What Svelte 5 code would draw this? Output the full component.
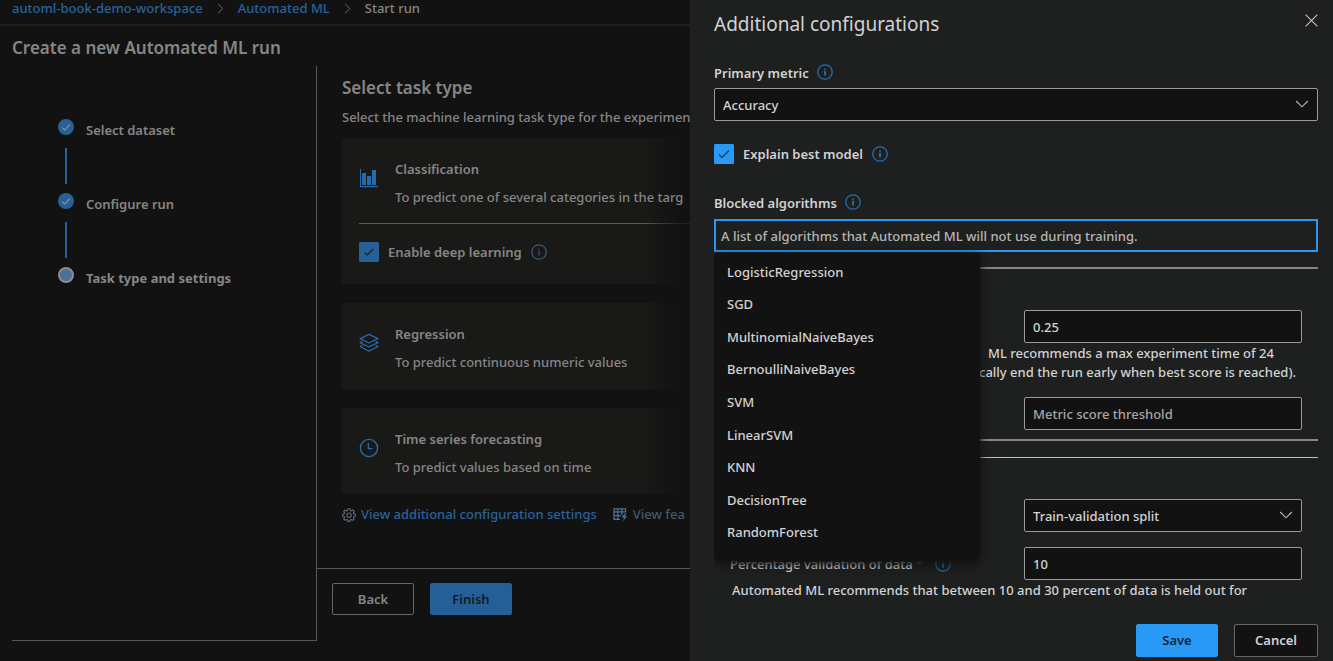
<script>
  const steps = [
    { label: 'Select dataset', done: true },
    { label: 'Configure run', done: true },
    { label: 'Task type and settings', done: false }
  ];

  const algorithms = [
    'LogisticRegression',
    'SGD',
    'MultinomialNaiveBayes',
    'BernoulliNaiveBayes',
    'SVM',
    'LinearSVM',
    'KNN',
    'DecisionTree',
    'RandomForest'
  ];

  let deepLearning = $state(true);
  let explainModel = $state(true);
  let metric = $state('Accuracy');
  let validation = $state('Train-validation split');
  let trainingHours = $state('0.25');
  let percentage = $state('10');
</script>

{#snippet info(name)}
  <button class="info" type="button" aria-label={name}>
    <svg width="16" height="16" viewBox="0 0 16 16" fill="none" stroke="currentColor">
      <circle cx="8" cy="8" r="7.2" stroke-width="1.3" />
      <path class="mark" d="M8 6.8v4.7M8 4.4v1.3" stroke-width="1.2" />
    </svg>
  </button>
{/snippet}

{#snippet crumbArrow()}
  <svg width="7" height="11" viewBox="0 0 7 11" fill="none" stroke="#6c6c6c" aria-hidden="true">
    <path d="M1 .8l4.8 4.7L1 10.2" />
  </svg>
{/snippet}

{#snippet chevron()}
  <svg class="chevron" width="14" height="8" viewBox="0 0 14 8" fill="none" stroke="#b9b9b9" stroke-width="1.1" aria-hidden="true">
    <path d="M1.2 1L7 6.8 12.8 1" />
  </svg>
{/snippet}

<div class="shell">
  <div class="page">
    <nav class="crumbs" aria-label="Breadcrumb">
      <a href="#workspace">automl-book-demo-workspace</a>
      {@render crumbArrow()}
      <a href="#automl">Automated ML</a>
      {@render crumbArrow()}
      <span>Start run</span>
    </nav>
    <h1>Create a new Automated ML run</h1>

    <div class="wizard">
      <ol class="steps">
        {#each steps as step}
          <li class:current={!step.done}>
            <svg class="dot" width="16" height="16" viewBox="0 0 16 16" fill="none" aria-hidden="true">
              {#if step.done}
                <circle cx="8" cy="8" r="8" fill="#286197" />
                <path d="M4 8.6l2.6 2.3L12 5.6" stroke="#8f8f8f" stroke-width="1.2" />
              {:else}
                <circle cx="8" cy="8" r="7" fill="#4a7298" stroke="#8c8c8c" stroke-width="2" />
              {/if}
            </svg>
            <span>{step.label}</span>
          </li>
        {/each}
      </ol>

      <main>
        <div class="task">
          <h2>Select task type</h2>
          <p class="lead">Select the machine learning task type for the experimen</p>

          <section class="card">
            <div class="row">
              <svg width="20" height="20" viewBox="0 0 20 20" fill="#286aa8" aria-hidden="true">
                <path d="M1 1h1v17H1zM1 18h18v1.2H1zM3 5h4v12H3zM8 8h4v9H8zM13 2h4v15h-4z" />
              </svg>
              <div>
                <h3>Classification</h3>
                <p>To predict one of several categories in the targ</p>
              </div>
            </div>
            <hr />
            <div class="check">
              <span class="box">
                <input id="deep" type="checkbox" bind:checked={deepLearning} />
                <svg width="12" height="10" viewBox="0 0 12 10" fill="none" stroke="#11202c" stroke-width="1.2" aria-hidden="true"><path d="M1.500 5.400l2.500 2.500L10.500 2" /></svg>
              </span>
              <label for="deep">Enable deep learning</label>
              {@render info('About deep learning')}
            </div>
          </section>

          <section class="card">
            <div class="row">
              <svg width="20" height="20" viewBox="0 0 20 20" fill="none" stroke="#286aa8" stroke-width="1.3" stroke-linejoin="round" aria-hidden="true">
                <path d="M10 1.4l8.8 4.3L10 10 1.2 5.7zM3.4 8.4L1.2 9.6 10 14l8.8-4.4-2.2-1.2M3.4 12.3l-2.2 1.2L10 18.2l8.8-4.7-2.2-1.2" />
              </svg>
              <div>
                <h3>Regression</h3>
                <p>To predict continuous numeric values</p>
              </div>
            </div>
          </section>

          <section class="card">
            <div class="row">
              <svg width="20" height="20" viewBox="0 0 20 20" fill="none" stroke="#286aa8" stroke-width="1.4" aria-hidden="true">
                <circle cx="10" cy="10" r="8.6" />
                <path d="M9.4 5v5.6h4" />
              </svg>
              <div>
                <h3>Time series forecasting</h3>
                <p>To predict values based on time</p>
              </div>
            </div>
          </section>

          <div class="links">
            <a href="#config">
              <svg width="14" height="14" viewBox="0 0 14 14" fill="none" stroke="#5c6a76" stroke-width="1.1" stroke-linejoin="round" aria-hidden="true">
                <path d="M5.9.8h2.2l.3 1.7 1 .4L10.8 2l1.5 1.5-.9 1.4.4 1 1.6.3v2.0l-1.6.3-.4 1 .9 1.4-1.5 1.5-1.4-.9-1 .4-.3 1.5H5.9l-.3-1.5-1-.4-1.4.9-1.5-1.5.9-1.4-.4-1L.6 8.200V6.200l1.6-.3.4-1-.9-1.400L3.200 2l1.400.9 1-.4z" />
                <circle cx="7" cy="7.200" r="2.200" />
              </svg>
              View additional configuration settings
            </a>
            <a class="cut" href="#features">
              <svg width="15" height="14" viewBox="0 0 15 14" fill="none" stroke="#4a739a" stroke-width="1.2" aria-hidden="true">
                <path d="M7 11.400H1V.8h11.600v4M1 3.800h11.600M1 7.600h7M4.800.8v10.600M8.800.8V7" />
                <path d="M11.800 5.600L8.400 9.400h2.800L9.600 13.400l4.600-5.200h-2.600l1.800-2.600z" fill="#56718a" stroke="none" />
              </svg>
              View fea
            </a>
          </div>
        </div>

        <footer class="actions">
          <button class="btn" type="button">Back</button>
          <button class="btn primary" type="button">Finish</button>
        </footer>
      </main>
    </div>
  </div>

  <aside class="panel">
    <header>
      <h2>Additional configurations</h2>
      <button class="close" type="button" aria-label="Close">
        <svg width="13" height="13" viewBox="0 0 13 13" fill="none" stroke="#c4c4c4" stroke-width="1.1"><path d="M.6.6l11.800 11.800M12.400.6L.6 12.400" /></svg>
      </button>
    </header>

    <div class="fields">
      <div class="label">
        <label for="metric">Primary metric</label>
        {@render info('About the primary metric')}
      </div>
      <div class="select">
        <select id="metric" bind:value={metric}>
          <option>Accuracy</option>
        </select>
        {@render chevron()}
      </div>

      <div class="check explain">
        <span class="box">
          <input id="explain" type="checkbox" bind:checked={explainModel} />
          <svg width="12" height="10" viewBox="0 0 12 10" fill="none" stroke="#15466f" stroke-width="1.4" aria-hidden="true"><path d="M1 5.400l3 3L11 1.400" /></svg>
        </span>
        <label for="explain">Explain best model</label>
        {@render info('About model explanations')}
      </div>

      <div class="label">
        <label for="blocked">Blocked algorithms</label>
        {@render info('About blocked algorithms')}
      </div>
      <div class="picker">
        <input id="blocked" type="text" placeholder="A list of algorithms that Automated ML will not use during training." />
        <ul class="menu">
          {#each algorithms as name}
            <li><button type="button">{name}</button></li>
          {/each}
        </ul>
      </div>

      <section class="group criteria">
        <input class="entry" type="text" aria-label="Training job time (hours)" bind:value={trainingHours} />
        <p class="hint"><span>ML recommends a max experiment time of 24</span><span>cally end the run early when best score is reached).</span></p>
        <input class="entry" type="text" aria-label="Metric score threshold" placeholder="Metric score threshold" />
      </section>

      <section class="group validation">
        <div class="select entry">
          <select aria-label="Validation type" bind:value={validation}>
            <option>Train-validation split</option>
          </select>
          {@render chevron()}
        </div>
        <div class="pair">
          <div class="label">
            <label for="percent">Percentage validation of data <span class="star">*</span></label>
            {@render info('About percentage validation')}
          </div>
          <input id="percent" class="entry" type="text" bind:value={percentage} />
        </div>
        <p class="note">Automated ML recommends that between 10 and 30 percent of data is held out for</p>
      </section>
    </div>

    <footer>
      <button class="btn primary" type="button">Save</button>
      <button class="btn" type="button">Cancel</button>
    </footer>
  </aside>
</div>

<style>
  :global(body) {
    margin: 0;
    background: #121212;
  }

  .shell,
  .shell * {
    box-sizing: border-box;
  }

  .shell {
    display: grid;
    grid-template-columns: minmax(0, 1fr) minmax(0, 643px);
    height: 100vh;
    overflow: hidden;
    font-family: 'Segoe UI', 'Noto Sans', 'Open Sans', sans-serif;
    font-size: 13px;
    font-weight: 500;
    line-height: 19px;
    color: #868686;
  }

  h1, h2, h3, p, ol, ul {
    margin: 0;
    padding: 0;
  }

  ol, ul {
    list-style: none;
  }

  h1, h2, h3 {
    font-weight: 600;
  }

  button, input, select {
    font: inherit;
    color: inherit;
  }

  svg {
    flex: none;
    display: block;
  }

  a {
    color: #27639d;
    text-decoration: none;
  }

  .page {
    display: flex;
    flex-direction: column;
    min-width: 0;
    overflow: hidden;
    white-space: nowrap;
  }

  .crumbs {
    display: flex;
    align-items: center;
    gap: 14px;
    height: 26px;
    padding: 0 12px 8px;
    border-bottom: 2px solid #1f1f1f;
  }

  h1 {
    padding: 10px 12px 6px;
    font-size: 17px;
    line-height: 24px;
  }

  .wizard {
    display: flex;
    flex: 1;
    min-height: 0;
  }

  .steps {
    display: flex;
    flex-direction: column;
    gap: 55px;
    width: 305px;
    margin: 0 0 20px 12px;
    padding: 55px 0 0 46px;
    border-right: 1px solid #585858;
    border-bottom: 1px solid #585858;
    font-weight: 600;
  }

  .steps li {
    display: flex;
    gap: 12px;
    position: relative;
  }

  .steps .current {
    font-weight: 700;
  }

  .steps li + li::before {
    content: '';
    position: absolute;
    left: 7px;
    top: -47px;
    width: 2px;
    height: 36px;
    background: #286197;
  }

  .dot {
    margin-top: -2px;
  }

  main {
    display: flex;
    flex-direction: column;
    flex: 1;
    min-width: 0;
  }

  .task {
    flex: 1;
    padding: 10px 0 0 25px;
    overflow: hidden;
  }

  .task h2 {
    font-size: 17px;
    line-height: 24px;
  }

  .lead {
    margin: 8px 0 11px;
  }

  .card {
    margin-bottom: 19px;
    padding: 22px 0 17px 17px;
    border-radius: 3px;
    background: linear-gradient(to right, #191917 86%, #121212 97%);
  }

  .row {
    display: flex;
    gap: 16px;
  }

  .row > svg {
    margin-top: 8px;
  }

  .card h3 {
    font-size: 13px;
    line-height: 19px;
    margin-bottom: 9px;
  }

  .card hr {
    height: 1px;
    margin: 16px 0 17px;
    border: 0;
    background: linear-gradient(to right, #5a5a5a 86%, #222 97%);
  }

  .check {
    display: flex;
    align-items: center;
    gap: 9px;
    font-weight: 600;
  }

  .check label {
    padding-top: 2px;
  }

  .card .check {
    padding-bottom: 5px;
  }

  .box {
    display: grid;
    place-items: center;
    width: 20px;
    height: 20px;
  }

  .box > * {
    grid-area: 1 / 1;
  }

  .box svg {
    visibility: hidden;
    pointer-events: none;
  }

  .box input:checked + svg {
    visibility: visible;
  }

  .box input {
    appearance: none;
    width: 20px;
    height: 20px;
    margin: 0;
    border: 1px solid #286197;
    border-radius: 1px;
  }

  .box input:checked {
    background: #286197;
  }

  .info {
    display: block;
    padding: 0;
    border: 0;
    background: none;
    color: #35597a;
  }

  .links {
    display: flex;
    gap: 16px;
    margin-top: -8px;
  }

  .links a {
    display: flex;
    align-items: center;
    gap: 5px;
  }

  .links .cut {
    color: #45586a;
  }

  .btn {
    height: 32px;
    padding: 0 20px;
    border: 1px solid #666;
    border-radius: 2px;
    background: transparent;
    font-weight: 600;
  }

  .actions {
    display: flex;
    gap: 16px;
    height: 93px;
    padding: 14px 15px;
    border-top: 1px solid #585858;
  }

  .actions .btn {
    min-width: 82px;
  }

  .actions .primary {
    border-color: #245f97;
    background: #245f97;
    color: #151b20;
  }

  .panel {
    display: flex;
    flex-direction: column;
    min-width: 0;
    min-height: 0;
    padding: 0 15px 4px 24px;
    background: #1e1f1f;
    color: #d2d2d2;
  }

  .panel header {
    display: flex;
    justify-content: space-between;
    align-items: flex-start;
    padding-top: 8px;
  }

  .panel header h2 {
    font-size: 19px;
    line-height: 32px;
    font-weight: 400;
  }

  .close {
    padding: 6px 0 0;
    border: 0;
    background: none;
  }

  .fields {
    flex: 1;
    min-height: 0;
    padding-top: 22px;
    overflow: hidden;
  }

  .label {
    display: flex;
    align-items: center;
    gap: 8px;
    height: 20px;
    font-weight: 600;
  }

  .label label {
    padding-top: 2px;
  }

  .panel .info {
    color: #2470b3;
  }

  .panel .info .mark {
    stroke: #2899f5;
  }

  .select {
    position: relative;
  }

  .chevron {
    position: absolute;
    right: 9px;
    top: 12px;
    pointer-events: none;
  }

  select,
  .picker input,
  input.entry {
    display: block;
    width: 100%;
    height: 33px;
    padding: 1px 8px 0;
    border: 1px solid #9a9a9a;
    border-radius: 2px;
    background: #121212;
    appearance: none;
    outline: 0;
  }

  select {
    padding-top: 2px;
  }

  .fields > .select {
    margin-top: 6px;
  }

  ::placeholder {
    color: #a6a6a6;
    opacity: 1;
  }

  .panel .box input:checked {
    border-color: #2899f5;
    background: #2899f5;
  }

  .explain {
    margin: 22px 0 28px;
  }

  .picker {
    position: relative;
    margin-top: 7px;
  }

  .picker input {
    padding: 1px 5px 0;
    border: 2px solid #2899f5;
    border-radius: 0;
    background: #1e1f1f;
  }

  .picker ::placeholder {
    color: #b5b5b5;
  }

  .menu {
    position: absolute;
    z-index: 1;
    left: 0;
    top: 34px;
    display: grid;
    grid-auto-rows: 1fr;
    width: 266px;
    height: 308px;
    padding: 3px 0 12px;
    border-radius: 4px 4px 8px 8px;
    background: #121212;
    box-shadow: 0 3px 8px 1px #121212;
  }

  .menu li {
    display: grid;
  }

  .menu button {
    padding: 0 13px;
    border: 0;
    background: none;
    text-align: left;
  }

  .group {
    border-top: 2px solid #858585;
  }

  .criteria {
    margin-top: 15px;
    padding: 41px 0 9px;
    border-bottom: 2px solid #858585;
  }

  .validation {
    margin-top: 16px;
    padding-top: 41px;
    border-top: 1px solid #c0c0c0;
  }

  .group .entry {
    width: 278px;
    margin: 0 16px 0 auto;
  }

  .hint {
    padding: 1px 0 15px 265px;
  }

  .hint span {
    display: block;
    white-space: nowrap;
  }

  .hint span:first-child {
    padding-left: 9px;
  }

  .pair {
    display: flex;
    align-items: center;
    margin-top: 15px;
    padding-left: 16px;
  }

  .pair .label {
    gap: 12px;
    font-weight: 500;
  }

  .star {
    color: #555;
  }

  .note {
    padding: 1px 0 0 18px;
  }

  .panel footer {
    display: flex;
    justify-content: flex-end;
    gap: 16px;
    padding-top: 8px;
  }

  .panel footer .btn {
    min-width: 82px;
    height: 33px;
    background: #121212;
  }

  .panel footer .primary {
    border-color: #2899f5;
    background: #2899f5;
    color: #10263a;
  }
</style>
